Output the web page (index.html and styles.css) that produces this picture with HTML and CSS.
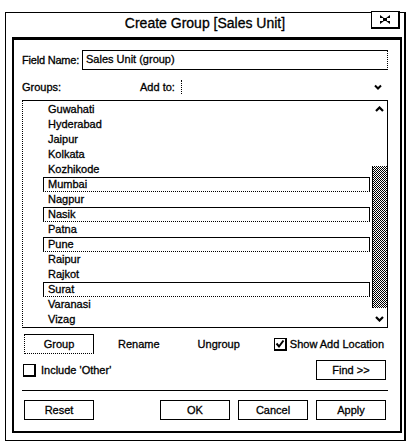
FILE: index.html
```html
<!DOCTYPE html>
<html lang="en">
<head>
    <meta charset="UTF-8">
    <title>Create Group [Sales Unit]</title>
    <link rel="stylesheet" href="styles.css">
</head>
<body>
    <div class="window">
        <div class="titlebar">
            <span></span>
            <span class="title">Create Group [Sales Unit]</span>
            <button class="close-btn">
                <svg width="14" height="11" viewBox="0 0 14 11">
                    <path d="M2 1 L6 4 L2 4 Z M12 1 L8 4 L12 4 Z M2 10 L6 7 L2 7 Z M12 10 L8 7 L12 7 Z M5 4 h4 v3 h-4 Z" fill="#000"/>
                </svg>
            </button>
        </div>

        <div class="panel">
            <div class="field-row">
                <label class="field-label">Field Name:</label>
                <div class="field-input">Sales Unit (group)</div>
            </div>

            <div class="groups-row">
                <span class="groups-label">Groups:</span>
                <span class="addto-label">Add to:</span>
                <span class="addto-select"></span>
                <svg class="chev" width="8" height="6" viewBox="0 0 8 6"><path d="M1 1.5 L4 4.5 L7 1.5" fill="none" stroke="#000" stroke-width="2"/></svg>
            </div>

            <div class="listbox">
                <ul class="items">
                    <li>Guwahati</li>
                    <li>Hyderabad</li>
                    <li>Jaipur</li>
                    <li>Kolkata</li>
                    <li>Kozhikode</li>
                    <li class="sel">Mumbai</li>
                    <li>Nagpur</li>
                    <li class="sel">Nasik</li>
                    <li>Patna</li>
                    <li class="sel">Pune</li>
                    <li>Raipur</li>
                    <li>Rajkot</li>
                    <li class="sel">Surat</li>
                    <li>Varanasi</li>
                    <li>Vizag</li>
                </ul>
                <div class="scrollbar">
                    <div class="arrow">
                        <svg width="9" height="6" viewBox="0 0 9 6"><path d="M1 5 L4.5 1.5 L8 5" fill="none" stroke="#000" stroke-width="2.2"/></svg>
                    </div>
                    <div class="track"></div>
                    <div class="thumb"></div>
                    <div class="arrow">
                        <svg width="9" height="6" viewBox="0 0 9 6"><path d="M1 1 L4.5 4.5 L8 1" fill="none" stroke="#000" stroke-width="2.2"/></svg>
                    </div>
                </div>
            </div>

            <div class="action-row">
                <button class="btn btn-group">Group</button>
                <span class="link rename">Rename</span>
                <span class="link ungroup">Ungroup</span>
                <label class="check show-add">
                    <span class="box">
                        <svg width="10" height="10" viewBox="0 0 10 10"><path d="M1.5 4.5 L4 7.5 L8.5 1.5" fill="none" stroke="#000" stroke-width="2"/></svg>
                    </span>
                    Show Add Location
                </label>
            </div>

            <div class="other-row">
                <label class="check">
                    <span class="box"></span>
                    Include 'Other'
                </label>
                <button class="btn">Find &gt;&gt;</button>
            </div>

            <div class="separator"></div>

            <div class="footer">
                <button class="btn">Reset</button>
                <div class="footer-right">
                    <button class="btn">OK</button>
                    <button class="btn">Cancel</button>
                    <button class="btn">Apply</button>
                </div>
            </div>
        </div>
    </div>
</body>
</html>
```

FILE: styles.css
```css
* {
    margin: 0;
    padding: 0;
    box-sizing: border-box;
}

body {
    font-family: 'Liberation Sans', Arial, sans-serif;
    font-size: 11px;
    color: #000;
    background: #fff;
    -webkit-text-stroke: 0.3px #000;
}

.window {
    margin: 12px 0 0 5px;
    width: 401px;
    height: 429px;
    border: 1px solid #000;
    border-right-width: 2px;
    display: flex;
    flex-direction: column;
}

.titlebar {
    height: 24px;
    display: grid;
    grid-template-columns: 1fr auto 1fr;
    align-items: start;
}

.title {
    font-size: 14px;
    padding-top: 2px;
}

.close-btn {
    justify-self: end;
    width: 29px;
    height: 18px;
    margin: -2px 4px 0 0;
    background: #fff;
    border: 1px solid #000;
    border-right-width: 2px;
    border-bottom-width: 2px;
    display: flex;
    align-items: center;
    justify-content: center;
}

.panel {
    flex: 1;
    margin: 0 2px 7px 6px;
    border: 2px solid #000;
    border-top-width: 3px;
    padding: 10px 12px 0 8px;
    display: flex;
    flex-direction: column;
}

.field-row {
    display: flex;
    align-items: center;
    height: 20px;
}

.field-label {
    width: 60px;
    letter-spacing: -0.2px;
}

.field-input {
    flex: 1;
    height: 20px;
    border: 1px solid #000;
    border-right-style: dotted;
    padding: 2px 3px;
}

.groups-row {
    display: flex;
    align-items: center;
    height: 16px;
    margin-top: 9px;
}

.groups-label {
    width: 118px;
}

.addto-label {
    width: 41px;
}

.addto-select {
    flex: 1;
    height: 14px;
    border-left: 1px dotted #000;
}

.chev {
    margin-right: 6px;
}

.listbox {
    margin-top: 5px;
    height: 228px;
    border: 1px solid #000;
    border-left-style: dotted;
    display: flex;
}

.items {
    list-style: none;
    flex: 1;
    padding: 1px 2px 0 20px;
}

.items li {
    height: 15px;
    line-height: 13px;
    padding-left: 4px;
    border: 1px solid transparent;
}

.items li.sel {
    border-color: #000;
    border-bottom-style: dotted;
}

.scrollbar {
    width: 15px;
    display: flex;
    flex-direction: column;
}

.arrow {
    height: 16px;
    display: flex;
    align-items: center;
    justify-content: center;
}

.track {
    height: 49px;
}

.thumb {
    flex: 1;
    margin-bottom: 3px;
    background: repeating-conic-gradient(#000 0 25%, #fff 0 50%) 0 0 / 2px 2px;
    border-left: 1px solid #000;
}

.action-row {
    display: flex;
    align-items: center;
    margin-top: 6px;
    height: 20px;
}

.btn {
    font-family: inherit;
    font-size: 11px;
    color: #000;
    background: #fff;
    width: 70px;
    height: 20px;
    border: 1px solid #000;
    -webkit-text-stroke: 0.3px #000;
}

.btn-group {
    margin-left: 2px;
    border-left-style: dotted;
    border-bottom-style: dotted;
}

.rename {
    margin-left: 24px;
}

.ungroup {
    margin-left: 38px;
}

.check {
    display: flex;
    align-items: center;
    gap: 5px;
}

.show-add {
    margin-left: auto;
    margin-right: 4px;
    gap: 3px;
}

.box {
    width: 13px;
    height: 13px;
    border: 1px solid #000;
    border-right-width: 2px;
    border-bottom-width: 2px;
    display: flex;
    align-items: center;
    justify-content: center;
}

.other-row {
    display: flex;
    align-items: center;
    justify-content: space-between;
    margin-top: 6px;
    height: 20px;
    padding: 0 2px 0 1px;
}

.separator {
    margin-top: 10px;
    border-top: 1px solid #000;
}

.footer {
    display: flex;
    justify-content: space-between;
    margin-top: 9px;
    padding: 0 2px;
}

.footer-right {
    display: flex;
    gap: 8px;
}
```
